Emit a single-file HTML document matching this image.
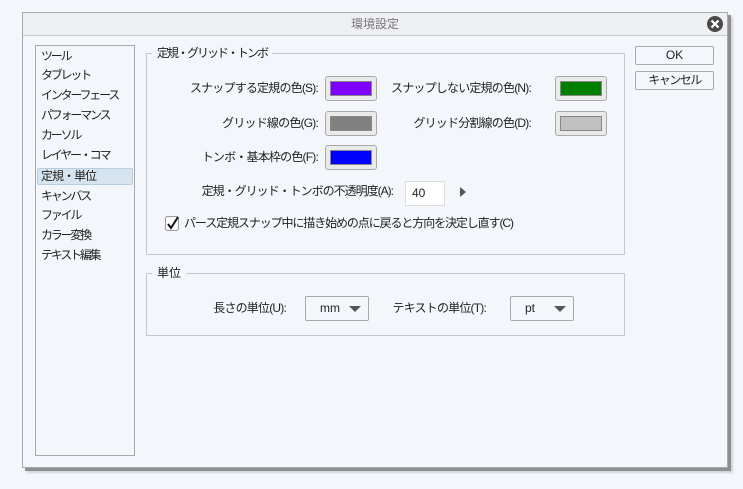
<!DOCTYPE html>
<html><head><meta charset="utf-8"><style>
*{margin:0;padding:0;box-sizing:border-box}
body{width:743px;height:489px;background:#f3f6fb;font-family:"Liberation Sans","Noto Sans CJK JP",sans-serif;font-size:12px;color:#222;position:relative;overflow:hidden}
.a{position:absolute}
.dlg{left:22px;top:12px;width:706px;height:456px;border:1px solid #a9a9a9;background:#f3f6fb;box-shadow:3px 3px 0 #8f8f8f,5px 5px 2px #d0d3d8}
.title{left:0;top:0;width:704px;height:23px;background:#eeeff2;border-bottom:1px solid #c8c8c8;text-align:center;line-height:22px;color:#777}
.list{left:35px;top:45px;width:100px;height:411px;border:1px solid #a8a8a8;background:#f3f6fb}
.it{position:absolute;left:5px;height:17px;line-height:17px;white-space:nowrap;letter-spacing:-2.2px}
.sel{left:37px;top:168px;width:96px;height:17px;background:#d6e4ef;border:1px solid #b9cfe0;border-radius:2px}
.grp{border:1px solid #c5c8cc}
.leg{background:#f3f6fb;padding:0 5px;line-height:14px;letter-spacing:-2px}
.lbl{text-align:right;line-height:14px;white-space:nowrap;letter-spacing:-0.8px}
.sw{width:52px;height:25px;border:1px solid #a9a9a9;border-radius:3px;background:#eaeaea;padding:4px}
.sw div{width:100%;height:100%;border:1px solid #888}
.btn{width:79px;height:19px;border:1px solid #a9a9a9;border-radius:2px;background:#f3f6fb;text-align:center;line-height:17px;letter-spacing:-1.5px}
.dd{width:64px;height:25px;border:1px solid #a9a9a9;border-radius:2px;background:#f3f6fb;line-height:23px;padding-left:14px}
.dd:after{content:"";position:absolute;right:7px;top:9px;border-left:6px solid transparent;border-right:6px solid transparent;border-top:6px solid #555}
</style></head><body>
<div class="a dlg"><div class="a title">環境設定</div></div>
<svg class="a" style="left:706px;top:15px" width="18" height="18"><circle cx="9" cy="9" r="8" fill="#4a4a4a"/><path d="M5.5 5.5L12.5 12.5M12.5 5.5L5.5 12.5" stroke="#fff" stroke-width="2.2"/></svg>
<div class="a list"></div>
<div class="a sel"></div>
<div class="a" style="left:36px;top:48px">
<div class="it" style="top:0">ツール</div>
<div class="it" style="top:19px">タブレット</div>
<div class="it" style="top:39px">インターフェース</div>
<div class="it" style="top:59px">パフォーマンス</div>
<div class="it" style="top:79px">カーソル</div>
<div class="it" style="top:99px">レイヤー・コマ</div>
<div class="it" style="top:120px;letter-spacing:-1px">定規・単位</div>
<div class="it" style="top:140px">キャンバス</div>
<div class="it" style="top:159px">ファイル</div>
<div class="it" style="top:179px">カラー変換</div>
<div class="it" style="top:199px">テキスト編集</div>
</div>
<div class="a grp" style="left:146px;top:53px;width:479px;height:202px"></div>
<div class="a leg" style="left:152px;top:46px">定規・グリッド・トンボ</div>
<div class="a grp" style="left:146px;top:273px;width:479px;height:63px"></div>
<div class="a leg" style="left:152px;top:266px;letter-spacing:0">単位</div>

<div class="a lbl" style="right:425px;top:81px">スナップする定規の色(S):</div>
<div class="a sw" style="left:325px;top:76px"><div style="background:#8000ff"></div></div>
<div class="a lbl" style="right:212px;top:81px">スナップしない定規の色(N):</div>
<div class="a sw" style="left:555px;top:76px"><div style="background:#008000"></div></div>
<div class="a lbl" style="right:425px;top:116px">グリッド線の色(G):</div>
<div class="a sw" style="left:325px;top:111px"><div style="background:#808080"></div></div>
<div class="a lbl" style="right:212px;top:116px">グリッド分割線の色(D):</div>
<div class="a sw" style="left:555px;top:111px"><div style="background:#c0c0c0"></div></div>
<div class="a lbl" style="right:425px;top:150px">トンボ・基本枠の色(F):</div>
<div class="a sw" style="left:325px;top:145px"><div style="background:#0000ff"></div></div>

<div class="a lbl" style="right:350px;top:184px;letter-spacing:-1px">定規・グリッド・トンボの不透明度(A):</div>
<div class="a" style="left:405px;top:181px;width:40px;height:25px;background:#fff;border:1px solid #ddd;padding-left:6px;line-height:23px">40</div>
<div class="a" style="left:460px;top:187px;border-top:5px solid transparent;border-bottom:5px solid transparent;border-left:6px solid #555"></div>

<svg class="a" style="left:165px;top:215px" width="16" height="17"><rect x="0.5" y="1.5" width="13" height="14" rx="2" fill="#fff" stroke="#999"/><path d="M3 9L6 13L13 2" stroke="#111" stroke-width="2" fill="none"/></svg>
<div class="a" style="left:184px;top:216px;line-height:14px;letter-spacing:-1.1px;white-space:nowrap">パース定規スナップ中に描き始めの点に戻ると方向を決定し直す(C)</div>

<div class="a lbl" style="right:457px;top:301px">長さの単位(U):</div>
<div class="a dd" style="left:305px;top:296px">mm</div>
<div class="a lbl" style="right:257px;top:301px">テキストの単位(T):</div>
<div class="a dd" style="left:510px;top:296px">pt</div>

<div class="a btn" style="left:635px;top:46px;letter-spacing:0">OK</div>
<div class="a btn" style="left:635px;top:71px">キャンセル</div>
</body></html>
